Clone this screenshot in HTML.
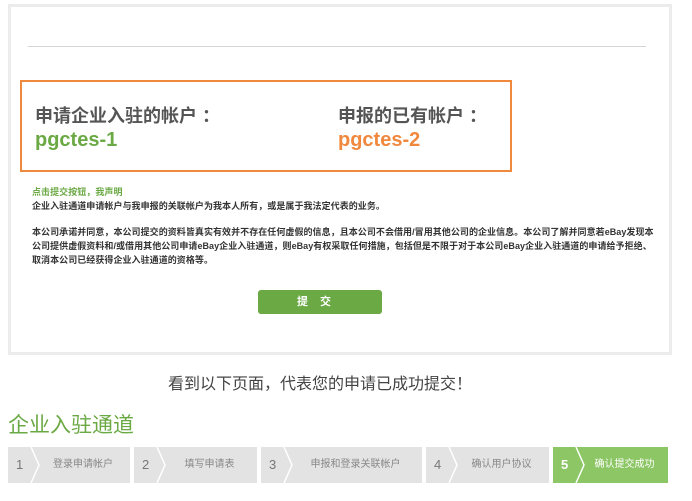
<!DOCTYPE html>
<html><head><meta charset="utf-8"><style>
body{margin:0;width:692px;height:501px;background:#fff;font-family:"Liberation Sans","Noto Sans CJK SC",sans-serif;position:relative;overflow:hidden}
.a{position:absolute}
.panel{left:8px;top:4px;width:658px;height:345px;border:3px solid #ececec;background:#fff}
.line{left:28px;top:46px;width:618px;height:1px;background:#d4d4d4}
.box{left:20px;top:80px;width:488px;height:88px;border:2px solid #f0883e}
.lbl{font-size:18px;font-weight:bold;color:#555}
.acc{font-size:20px;font-weight:bold}
.sm{font-size:9px;color:#333;line-height:14px;font-weight:bold;letter-spacing:0.05px}
.btn{left:258px;top:290px;width:124px;height:24px;background:#6aa944;border-radius:3px;color:#fff;font-size:11px;font-weight:bold;text-align:center;line-height:24px;letter-spacing:12px}
.step{top:447px;height:36px;background:#e3e3e3;color:#888;font-size:10px}
.step .n{position:absolute;left:8px;top:0;line-height:36px;font-size:13px;color:#777}
.step .t{position:absolute;left:28px;right:0;top:0;line-height:36px;text-align:center}
.step svg{position:absolute;left:22px;top:0}
</style></head><body>
<div class="a panel"></div>
<div class="a line"></div>
<div class="a box"></div>
<div class="a lbl" style="left:35px;top:102px">申请企业入驻的帐户 ：</div>
<div class="a acc" style="left:35px;top:129px;color:#6aa944">pgctes-1</div>
<div class="a lbl" style="left:338px;top:102px">申报的已有帐户 ：</div>
<div class="a acc" style="left:338px;top:129px;color:#f0883e">pgctes-2</div>
<div class="a sm" style="left:32px;top:185px;color:#6aa944">点击提交按钮，我声明</div>
<div class="a sm" style="left:32px;top:199px">企业入驻通道申请帐户与我申报的关联帐户为我本人所有，或是属于我法定代表的业务。</div>
<div class="a sm" style="left:32px;top:225px;width:624px">本公司承诺并同意，本公司提交的资料皆真实有效并不存在任何虚假的信息，且本公司不会借用/冒用其他公司的企业信息。本公司了解并同意若eBay发现本公司提供虚假资料和/或借用其他公司申请eBay企业入驻通道，则eBay有权采取任何措施，包括但是不限于对于本公司eBay企业入驻通道的申请给予拒绝、取消本公司已经获得企业入驻通道的资格等。</div>
<div class="a btn">提交</div>
<div class="a" style="left:0;width:640px;top:370px;text-align:center;font-size:16px;color:#444">看到以下页面，代表您的申请已成功提交！</div>
<div class="a" style="left:8px;top:409px;font-size:21px;color:#6aa944">企业入驻通道</div>
<div class="a step" style="left:8px;width:122px"><span class="n">1</span><svg width="12" height="36"><path d="M1 0L9 18L1 36" fill="none" stroke="#fff" stroke-width="1.5"/></svg><span class="t">登录申请帐户</span></div>
<div class="a step" style="left:134px;width:123px"><span class="n">2</span><svg width="12" height="36"><path d="M1 0L9 18L1 36" fill="none" stroke="#fff" stroke-width="1.5"/></svg><span class="t">填写申请表</span></div>
<div class="a step" style="left:261px;width:161px"><span class="n">3</span><svg width="12" height="36"><path d="M1 0L9 18L1 36" fill="none" stroke="#fff" stroke-width="1.5"/></svg><span class="t">申报和登录关联帐户</span></div>
<div class="a step" style="left:426px;width:123px"><span class="n">4</span><svg width="12" height="36"><path d="M1 0L9 18L1 36" fill="none" stroke="#fff" stroke-width="1.5"/></svg><span class="t">确认用户协议</span></div>
<div class="a step" style="left:553px;width:115px;background:#8cc665;color:#fff"><span class="n" style="color:#fff;font-weight:bold">5</span><svg width="12" height="36"><path d="M1 0L9 18L1 36" fill="none" stroke="#fff" stroke-width="1.5"/></svg><span class="t">确认提交成功</span></div>
</body></html>
